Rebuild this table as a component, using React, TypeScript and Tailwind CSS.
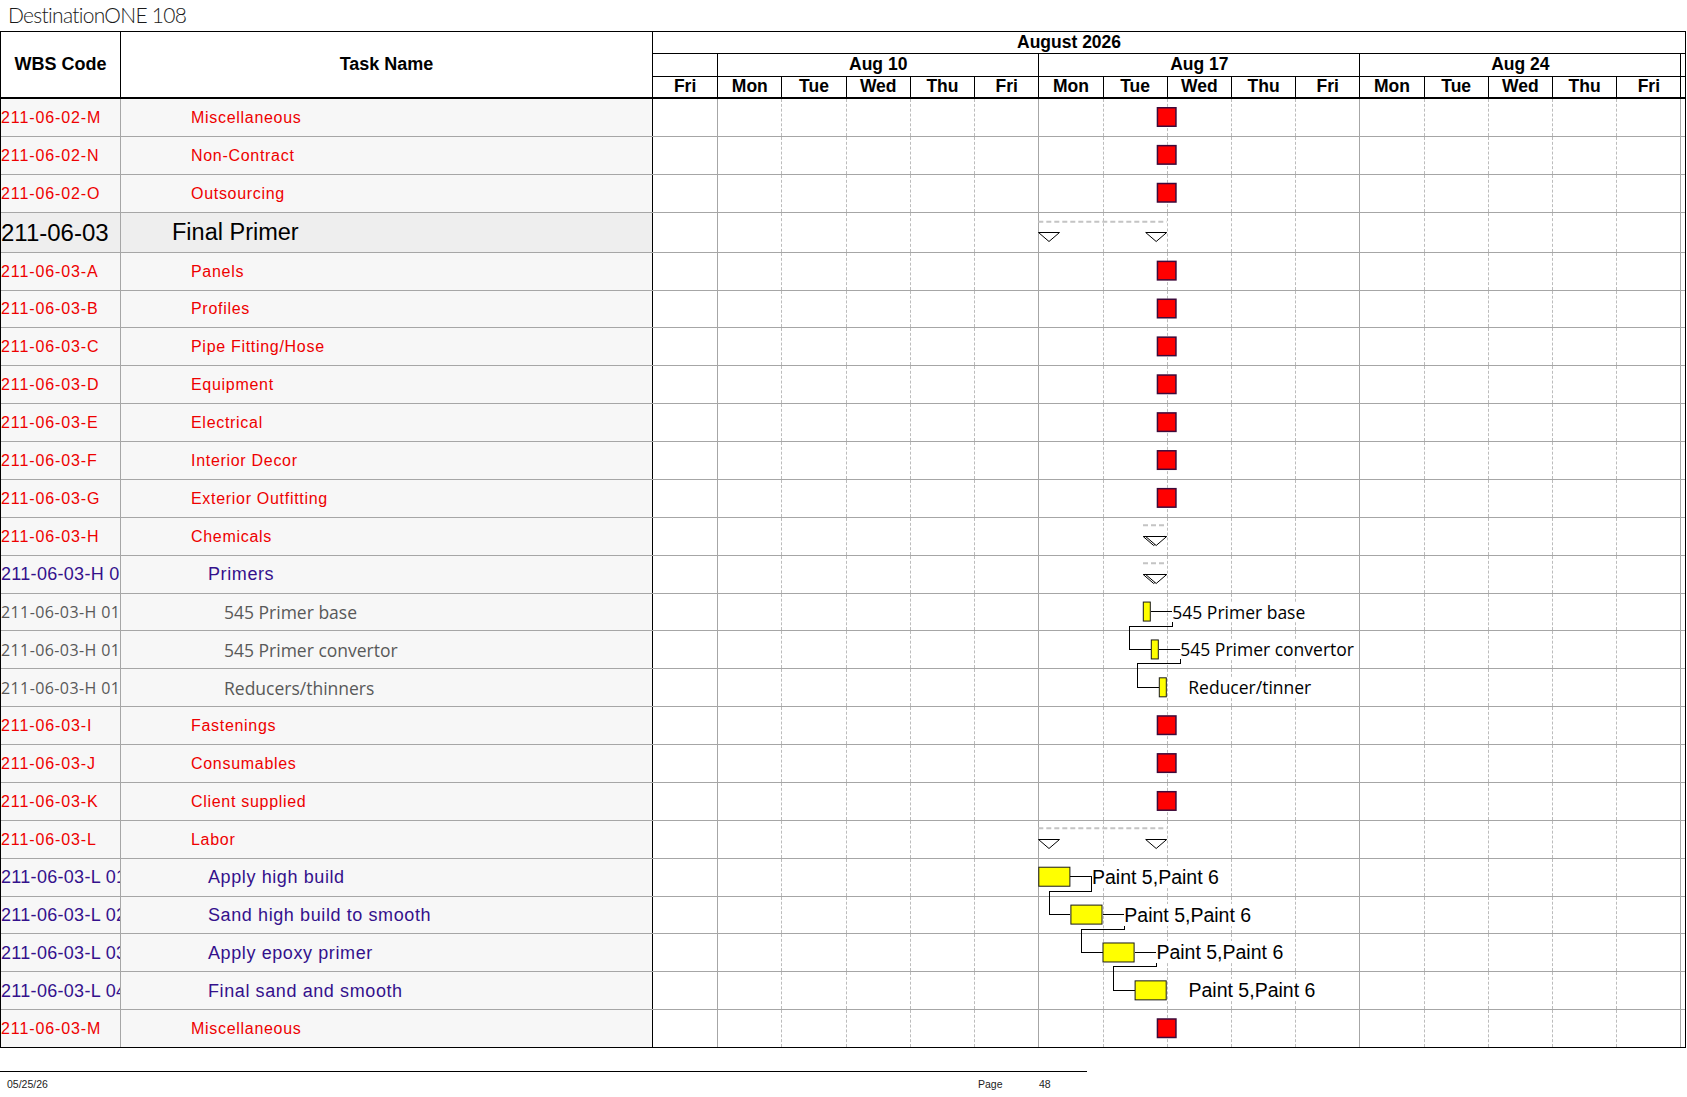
import React from 'react';

type Kind = 'red' | 'fp' | 'purple' | 'gray';
type Mark = 'sq' | 'sumWide' | 'sumNarrow' | 'none';
interface Row {
  wbs: string;
  name: string;
  kind: Kind;
  mark: Mark;
}

const rows: Row[] = [
  { wbs: '211-06-02-M', name: 'Miscellaneous', kind: 'red', mark: 'sq' },
  { wbs: '211-06-02-N', name: 'Non-Contract', kind: 'red', mark: 'sq' },
  { wbs: '211-06-02-O', name: 'Outsourcing', kind: 'red', mark: 'sq' },
  { wbs: '211-06-03', name: 'Final Primer', kind: 'fp', mark: 'sumWide' },
  { wbs: '211-06-03-A', name: 'Panels', kind: 'red', mark: 'sq' },
  { wbs: '211-06-03-B', name: 'Profiles', kind: 'red', mark: 'sq' },
  { wbs: '211-06-03-C', name: 'Pipe Fitting/Hose', kind: 'red', mark: 'sq' },
  { wbs: '211-06-03-D', name: 'Equipment', kind: 'red', mark: 'sq' },
  { wbs: '211-06-03-E', name: 'Electrical', kind: 'red', mark: 'sq' },
  { wbs: '211-06-03-F', name: 'Interior Decor', kind: 'red', mark: 'sq' },
  { wbs: '211-06-03-G', name: 'Exterior Outfitting', kind: 'red', mark: 'sq' },
  { wbs: '211-06-03-H', name: 'Chemicals', kind: 'red', mark: 'sumNarrow' },
  { wbs: '211-06-03-H 01', name: 'Primers', kind: 'purple', mark: 'sumNarrow' },
  { wbs: '211-06-03-H 01.01', name: '545 Primer base', kind: 'gray', mark: 'none' },
  { wbs: '211-06-03-H 01.02', name: '545 Primer convertor', kind: 'gray', mark: 'none' },
  { wbs: '211-06-03-H 01.03', name: 'Reducers/thinners', kind: 'gray', mark: 'none' },
  { wbs: '211-06-03-I', name: 'Fastenings', kind: 'red', mark: 'sq' },
  { wbs: '211-06-03-J', name: 'Consumables', kind: 'red', mark: 'sq' },
  { wbs: '211-06-03-K', name: 'Client supplied', kind: 'red', mark: 'sq' },
  { wbs: '211-06-03-L', name: 'Labor', kind: 'red', mark: 'sumWide' },
  { wbs: '211-06-03-L 01', name: 'Apply high build', kind: 'purple', mark: 'none' },
  { wbs: '211-06-03-L 02', name: 'Sand high build to smooth', kind: 'purple', mark: 'none' },
  { wbs: '211-06-03-L 03', name: 'Apply epoxy primer', kind: 'purple', mark: 'none' },
  { wbs: '211-06-03-L 04', name: 'Final sand and smooth', kind: 'purple', mark: 'none' },
  { wbs: '211-06-03-M', name: 'Miscellaneous', kind: 'red', mark: 'sq' },
];

const RH = 37.88;
const FPH = 40;
const rowTop = (i: number) => (i < 4 ? i * RH : 3 * RH + FPH + (i - 4) * RH);

const wbsClass: Record<Kind, string> = {
  red: "font-['Liberation_Sans',Arial,sans-serif] text-[16px] tracking-[0.9px] text-[#ee0000] bg-[#f7f7f7]",
  fp: "font-['Liberation_Sans',Arial,sans-serif] text-[24px] text-black bg-[#eeeeee]",
  purple: "font-['Liberation_Sans',Arial,sans-serif] text-[18px] tracking-[0.3px] text-[#34118c] bg-[#f7f7f7]",
  gray: "font-['Open_Sans',sans-serif] text-[16px] tracking-[0.4px] text-[#595959] bg-[#f7f7f7]",
};

const taskClass: Record<Kind, string> = {
  red: "font-['Liberation_Sans',Arial,sans-serif] text-[16px] tracking-[0.7px] text-[#ee0000] pl-[70px] bg-[#f7f7f7]",
  fp: "font-['Liberation_Sans',Arial,sans-serif] text-[23.5px] text-black pl-[51px] bg-[#eeeeee]",
  purple: "font-['Liberation_Sans',Arial,sans-serif] text-[18px] tracking-[0.6px] text-[#34118c] pl-[87px] bg-[#f7f7f7]",
  gray: "font-['Open_Sans',sans-serif] text-[17.5px] text-[#595959] pl-[103px] bg-[#f7f7f7]",
};

const dayNames = ['Fri', 'Mon', 'Tue', 'Wed', 'Thu', 'Fri', 'Mon', 'Tue', 'Wed', 'Thu', 'Fri', 'Mon', 'Tue', 'Wed', 'Thu', 'Fri'];
const weekEnd = new Set([0, 5, 10, 15]);

const px = (v: number) => Math.round(v - 0.5) + 0.5;

const primerBars = [
  { row: 13, l: 1142.8, r: 1150.8 },
  { row: 14, l: 1150.8, r: 1158.8 },
  { row: 15, l: 1158.8, r: 1166.8 },
];
const paintBars = [
  { row: 20, l: 1038.3, r: 1070.4 },
  { row: 21, l: 1070.4, r: 1102.5 },
  { row: 22, l: 1102.5, r: 1134.6 },
  { row: 23, l: 1134.6, r: 1166.7 },
];

const chains = [primerBars, paintBars];

const labels = [
  { row: 13, x: 1172.3, text: '545 Primer base', kind: 'open' },
  { row: 14, x: 1180.3, text: '545 Primer convertor', kind: 'open' },
  { row: 15, x: 1188.3, text: 'Reducer/tinner', kind: 'open' },
  { row: 20, x: 1092, text: 'Paint 5,Paint 6', kind: 'arial' },
  { row: 21, x: 1124.3, text: 'Paint 5,Paint 6', kind: 'arial' },
  { row: 22, x: 1156.4, text: 'Paint 5,Paint 6', kind: 'arial' },
  { row: 23, x: 1188.5, text: 'Paint 5,Paint 6', kind: 'arial' },
];

function Triangle({ x, y }: { x: number; y: number }) {
  return (
    <polygon
      points={`${x},${y} ${x + 21},${y} ${x + 10.5},${y + 9}`}
      fill="#ffffff"
      stroke="#000000"
      strokeWidth={1}
    />
  );
}

function ChartOverlay() {
  const items: React.ReactNode[] = [];
  rows.forEach((r, i) => {
    const t = rowTop(i);
    const shift = r.kind === 'fp' ? 1.5 : 0;
    if (r.mark === 'sq') {
      items.push(
        <rect
          key={`sq${i}`}
          x={1157.45}
          y={t + 8.75 + shift}
          width={18.5}
          height={18.5}
          fill="#ff0000"
          stroke="#3d0a3a"
          strokeWidth={1.5}
        />
      );
    }
    if (r.mark === 'sumWide' || r.mark === 'sumNarrow') {
      const x1 = r.mark === 'sumWide' ? 1038.3 : 1143;
      const x2 = 1166.7;
      items.push(
        <line
          key={`sl${i}`}
          x1={x1}
          x2={x2}
          y1={t + 7.5 + shift}
          y2={t + 7.5 + shift}
          stroke="#c4c4c4"
          strokeWidth={2}
          strokeDasharray="5 3"
        />
      );
      items.push(<Triangle key={`ta${i}`} x={r.mark === 'sumWide' ? 1038.5 : 1143.2} y={px(t + 18.5 + shift)} />);
      items.push(<Triangle key={`tb${i}`} x={1145.7} y={px(t + 18.5 + shift)} />);
    }
  });

  chains.forEach((bars, ci) => {
    bars.forEach((b, k) => {
      const t = rowTop(b.row);
      const yc = px(t + 18);
      const next = bars[k + 1];
      if (next) {
        const tn = rowTop(next.row);
        const d = `M ${b.r} ${yc} H ${px(b.r + 21.5)} V ${px(t + 32.5)} H ${px(next.l - 21)} V ${px(tn + 18)} H ${next.l}`;
        items.push(<path key={`ln${ci}-${k}`} d={d} fill="none" stroke="#000000" strokeWidth={1} shapeRendering="crispEdges" />);
      }
    });
    bars.forEach((b, k) => {
      const t = rowTop(b.row);
      items.push(
        <rect
          key={`bar${ci}-${k}`}
          x={b.l + 0.5}
          y={t + 8.5}
          width={b.r - b.l - 1}
          height={19}
          fill="#ffff00"
          stroke="#1a1a1a"
          strokeWidth={1}
        />
      );
    });
  });

  return (
    <svg className="absolute top-0 left-[-1px] pointer-events-none" width={1686} height={960}>
      {items}
    </svg>
  );
}

function Labels() {
  return (
    <>
      {labels.map((l, i) => {
        const t = rowTop(l.row);
        if (l.kind === 'open') {
          return (
            <div
              key={i}
              className="absolute whitespace-nowrap bg-white pr-[5px] font-['Open_Sans',sans-serif] text-[17.5px] leading-[20px] text-black"
              style={{ left: l.x - 1, top: t + 8 }}
            >
              {l.text}
            </div>
          );
        }
        return (
          <div
            key={i}
            className="absolute whitespace-nowrap bg-white pr-[5px] font-['Liberation_Sans',Arial,sans-serif] text-[19.5px] leading-[22px] text-black"
            style={{ left: l.x - 1, top: t + 7 }}
          >
            {l.text}
          </div>
        );
      })}
    </>
  );
}

function ChartCells() {
  return (
    <div className="grid h-full flex-1 grid-cols-[65.2px_repeat(15,64.22px)_1fr] bg-white">
      {dayNames.map((_, c) =>
        weekEnd.has(c) ? (
          <div key={c} className="h-full border-r border-[#a6a6a6]" />
        ) : (
          <div key={c} className="h-full border-r border-dashed border-[#bcbcbc]" />
        )
      )}
      <div className="h-full" />
    </div>
  );
}

export default function App() {
  return (
    <div className="w-[1687px] min-h-[1097px] bg-white font-['Liberation_Sans',Arial,sans-serif] text-black">
      {/* Title */}
      <div className="flex h-[31px] items-center pb-[2px] pl-[8px] font-['Lato',sans-serif] text-[21px] font-light tracking-[-0.7px] text-[#1a1a1a]">
        DestinationONE 108
      </div>

      {/* Table */}
      <div className="w-[1686px] border border-black">
        {/* Header */}
        <div className="flex h-[67px] border-b-2 border-black">
          <div className="flex w-[120px] shrink-0 items-center justify-center border-r border-black text-[18px] font-bold">
            WBS Code
          </div>
          <div className="flex w-[532px] shrink-0 items-center justify-center border-r border-black text-[18px] font-bold">
            Task Name
          </div>
          <div className="flex flex-1 flex-col text-[17.5px] font-bold leading-none">
            <div className="flex h-[22px] items-center border-b border-black pl-[364px]">August 2026</div>
            <div className="grid h-[23px] grid-cols-[65.2px_repeat(15,64.22px)_1fr] border-b border-black">
              <div className="border-r border-black" />
              <div className="col-span-5 flex items-center justify-center border-r border-black">Aug 10</div>
              <div className="col-span-5 flex items-center justify-center border-r border-black">Aug 17</div>
              <div className="col-span-5 flex items-center justify-center border-r border-black">Aug 24</div>
              <div />
            </div>
            <div className="grid h-[20px] grid-cols-[65.2px_repeat(15,64.22px)_1fr]">
              {dayNames.map((d, c) => (
                <div key={c} className="flex items-center justify-center border-r border-black">
                  {d}
                </div>
              ))}
              <div />
            </div>
          </div>
        </div>

        {/* Body */}
        <div className="relative">
          {rows.map((r, i) => {
            const last = i === rows.length - 1;
            const h = r.kind === 'fp' ? 'h-[40px]' : last ? 'h-[36.88px]' : 'h-[37.88px]';
            return (
              <div key={i} className={`flex ${h} ${last ? '' : 'border-b border-[#a6a6a6]'}`}>
                <div
                  className={`flex w-[120px] shrink-0 items-center overflow-hidden whitespace-nowrap border-r border-[#a6a6a6] pt-[1px] ${wbsClass[r.kind]}`}
                >
                  {r.wbs}
                </div>
                <div
                  className={`flex w-[532px] shrink-0 items-center overflow-hidden whitespace-nowrap border-r border-black pt-[1px] ${taskClass[r.kind]}`}
                >
                  {r.name}
                </div>
                <ChartCells />
              </div>
            );
          })}
          <ChartOverlay />
          <Labels />
        </div>
      </div>

      {/* Footer */}
      <div className="mt-[23px] w-[1087px] border-t border-black">
        <div className="flex pt-[6px] text-[10.5px] leading-[12px] text-[#222]">
          <span className="w-[978px] pl-[7px]">05/25/26</span>
          <span className="w-[61px]">Page</span>
          <span>48</span>
        </div>
      </div>
    </div>
  );
}
